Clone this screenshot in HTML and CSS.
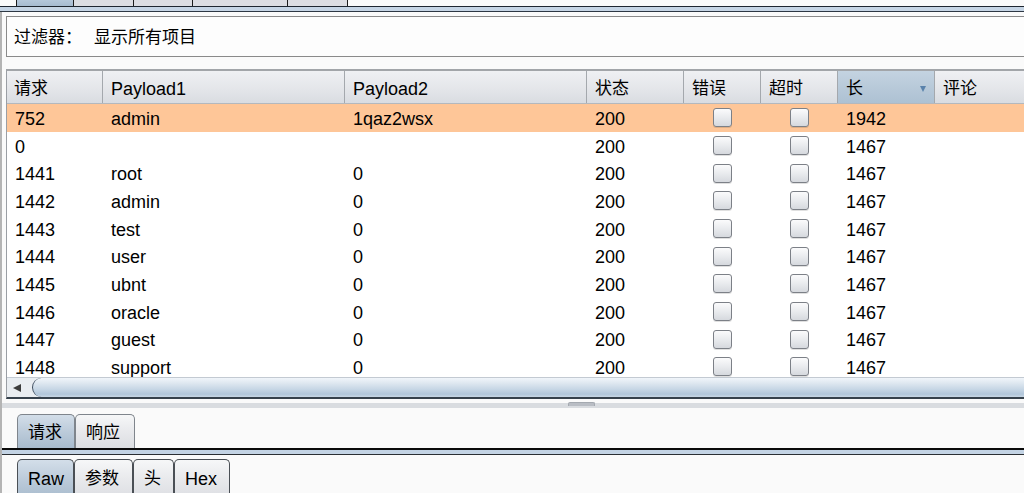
FILE: index.html
```html
<!DOCTYPE html>
<html lang="zh">
<head>
<meta charset="utf-8">
<link rel="stylesheet" href="styles.css">
</head>
<body>
<div class="toptabs">
  <div class="ttab sel w1"></div>
  <div class="ttab w2"></div>
  <div class="ttab w3"></div>
  <div class="ttab w4"></div>
  <div class="ttab w5"></div>
</div>
<div class="tabline"></div>
<div class="main">
  <div class="filter">过滤器：<span class="gap"></span>显示所有项目</div>
  <div class="table">
    <div class="thead">
      <div class="th">请求</div>
      <div class="th lat">Payload1</div>
      <div class="th lat">Payload2</div>
      <div class="th">状态</div>
      <div class="th">错误</div>
      <div class="th">超时</div>
      <div class="th sorted">长<span class="arrow"></span></div>
      <div class="th last">评论</div>
    </div>
    <div class="tbody">
      <div class="tr hl"><div class="td">752</div><div class="td">admin</div><div class="td">1qaz2wsx</div><div class="td">200</div><div class="td c"><span class="cb"></span></div><div class="td c"><span class="cb"></span></div><div class="td">1942</div><div class="td"></div></div>
      <div class="tr"><div class="td">0</div><div class="td"></div><div class="td"></div><div class="td">200</div><div class="td c"><span class="cb"></span></div><div class="td c"><span class="cb"></span></div><div class="td">1467</div><div class="td"></div></div>
      <div class="tr"><div class="td">1441</div><div class="td">root</div><div class="td">0</div><div class="td">200</div><div class="td c"><span class="cb"></span></div><div class="td c"><span class="cb"></span></div><div class="td">1467</div><div class="td"></div></div>
      <div class="tr"><div class="td">1442</div><div class="td">admin</div><div class="td">0</div><div class="td">200</div><div class="td c"><span class="cb"></span></div><div class="td c"><span class="cb"></span></div><div class="td">1467</div><div class="td"></div></div>
      <div class="tr"><div class="td">1443</div><div class="td">test</div><div class="td">0</div><div class="td">200</div><div class="td c"><span class="cb"></span></div><div class="td c"><span class="cb"></span></div><div class="td">1467</div><div class="td"></div></div>
      <div class="tr"><div class="td">1444</div><div class="td">user</div><div class="td">0</div><div class="td">200</div><div class="td c"><span class="cb"></span></div><div class="td c"><span class="cb"></span></div><div class="td">1467</div><div class="td"></div></div>
      <div class="tr"><div class="td">1445</div><div class="td">ubnt</div><div class="td">0</div><div class="td">200</div><div class="td c"><span class="cb"></span></div><div class="td c"><span class="cb"></span></div><div class="td">1467</div><div class="td"></div></div>
      <div class="tr"><div class="td">1446</div><div class="td">oracle</div><div class="td">0</div><div class="td">200</div><div class="td c"><span class="cb"></span></div><div class="td c"><span class="cb"></span></div><div class="td">1467</div><div class="td"></div></div>
      <div class="tr"><div class="td">1447</div><div class="td">guest</div><div class="td">0</div><div class="td">200</div><div class="td c"><span class="cb"></span></div><div class="td c"><span class="cb"></span></div><div class="td">1467</div><div class="td"></div></div>
      <div class="tr"><div class="td">1448</div><div class="td">support</div><div class="td">0</div><div class="td">200</div><div class="td c"><span class="cb"></span></div><div class="td c"><span class="cb"></span></div><div class="td">1467</div><div class="td"></div></div>
    </div>
    <div class="hscroll">
      <div class="sbtn"><span class="larrow"></span></div>
      <div class="thumb"></div>
    </div>
  </div>
  <div class="splitter"><span class="grip"></span></div>
  <div class="btabs">
    <div class="btab sel bw1">请求</div>
    <div class="btab bw2">响应</div>
  </div>
  <div class="bline"></div>
  <div class="stabs">
    <div class="stab sel sw1 lat">Raw</div>
    <div class="stab sw2">参数</div>
    <div class="stab sw3">头</div>
    <div class="stab sw4 lat">Hex</div>
  </div>
</div>
</body>
</html>
```
FILE: styles.css
```css
html, body {
  margin: 0;
  padding: 0;
  height: 100%;
  overflow: hidden;
}
body {
  background: #fafafa;
  font-family: "Liberation Sans", "Noto Sans CJK SC", sans-serif;
  font-size: 17px;
  color: #000;
}
.lat { font-size: 18px; }
.toptabs {
  display: flex;
  height: 6px;
  padding-left: 16px;
  background: #fafafa;
}
.ttab {
  height: 6px;
  background: #dcdde2;
  border-right: 1px solid #1c1c1c;
}
.ttab.w1 { border-left: 1px solid #1c1c1c; width: 56px; }
.ttab.w2 { width: 59px; }
.ttab.w3 { width: 58px; }
.ttab.w4 { width: 94px; }
.ttab.w5 { width: 59px; }
.ttab.sel { background: linear-gradient(#b4c7da, #a6bbd0); }
.tabline {
  height: 4px;
  border-top: 1px solid #1e2630;
  border-bottom: 1px solid #2e3844;
  background: #c6d5e5;
}
.main {
  border-left: 2px solid #b4b4b4;
  padding-top: 4px;
  height: 600px;
}
.filter {
  margin-left: 4px;
  height: 39px;
  line-height: 42px;
  border-top: 1px solid #8a8a8a;
  border-left: 1px solid #8a8a8a;
  border-bottom: 1px solid #8a8a8a;
  background: #fdfdfd;
  padding-left: 7px;
}
.gap {
  display: inline-block;
  width: 12px;
}
.table {
  margin-top: 12px;
  margin-left: 4px;
  border-left: 1px solid #9a9ea4;
  border-top: 2px solid #a2a5a9;
  border-bottom: 2px solid #36414c;
  background: #fff;
}
.thead, .tr {
  display: grid;
  grid-template-columns: 96px 242px 242px 97px 77px 77px 97px 1fr;
}
.thead {
  height: 32px;
  border-bottom: 1px solid #b4b8bd;
  background: linear-gradient(#eff0f3, #e3e5e9 60%, #d9dce1);
}
.th {
  border-right: 1px solid #a4a8ad;
  padding-left: 7px;
  padding-top: 2px;
  line-height: 32px;
  height: 32px;
  box-sizing: border-box;
  position: relative;
}
.th:nth-child(n+2) { padding-left: 8px; }
.th.last { border-right: none; }
.th.sorted {
  background: linear-gradient(#c4d3e1, #b6c8d8 60%, #adc1d3);
}
.arrow {
  position: absolute;
  right: 8px;
  top: 15px;
  width: 0;
  height: 0;
  border-left: 3.5px solid transparent;
  border-right: 3.5px solid transparent;
  border-top: 6px solid #5a82ab;
}
.tbody {
  height: 273px;
  overflow: hidden;
  font-size: 18px;
}
.tr {
  height: 27.67px;
}
.tr.hl { background: #fec698; }
.td {
  padding-left: 8px;
  padding-top: 2px;
  line-height: 27.67px;
  white-space: nowrap;
  overflow: hidden;
}
.td.c {
  padding: 0;
  display: flex;
  align-items: center;
  justify-content: center;
}
.cb {
  display: block;
  width: 17px;
  height: 17px;
  border: 1px solid #7c8087;
  border-radius: 3px;
  background: linear-gradient(#fbfbfc, #e9ebee 50%, #d6d9de);
  box-shadow: 0 1px 0 rgba(0,0,0,0.12);
}
.hscroll {
  display: flex;
  height: 19px;
  border-top: 1px solid #c3cad2;
  background: #e9edf1;
}
.sbtn {
  width: 25px;
  display: flex;
  align-items: center;
  padding-left: 6px;
  box-sizing: border-box;
}
.larrow {
  width: 0;
  height: 0;
  border-top: 4.5px solid transparent;
  border-bottom: 4.5px solid transparent;
  border-right: 8px solid #3c3c3c;
}
.thumb {
  flex: 1;
  border-left: 1.5px solid #3e4d5e;
  border-radius: 11px 0 0 11px;
  background: linear-gradient(#f0f5fa, #dce6ef 30%, #c2d3e3 65%, #b1c6da 85%, #c8d7e5);
}
.splitter {
  margin-top: 4px;
  height: 5px;
  background: #d9dce0;
  position: relative;
}
.grip {
  position: absolute;
  left: 566px;
  top: -1px;
  width: 25px;
  height: 3px;
  background: #b9bdc4;
  border: 1px solid #a4a9b0;
  border-bottom: none;
  border-radius: 2px 2px 0 0;
}
.btabs, .stabs {
  display: flex;
  padding-left: 15px;
}
.btabs { margin-top: 6px; }
.btab, .stab {
  box-sizing: border-box;
  height: 34px;
  line-height: 36px;
  padding-left: 10px;
  border: 1px solid #7f858c;
  border-bottom: none;
  border-radius: 5px 5px 0 0;
  background: linear-gradient(#f6f7f8, #e8e9ec 50%, #dcdee2);
}
.btab.sel, .stab.sel {
  background: linear-gradient(#d3dee9, #bccbda 50%, #a8bbcd);
}
.bw1 { width: 58px; }
.bw2 { width: 60px; }
.bline {
  height: 4px;
  border-top: 2px solid #0a0a0a;
  border-bottom: 1px solid #2a2e33;
  background: #c3d3e4;
}
.stabs { margin-top: 4px; }
.stab {
  border-color: #4a4f55;
  height: 40px;
  line-height: 38px;
}
.sw1 { width: 57px; }
.sw2 { width: 59px; }
.sw3 { width: 41px; }
.sw4 { width: 56px; }
```
